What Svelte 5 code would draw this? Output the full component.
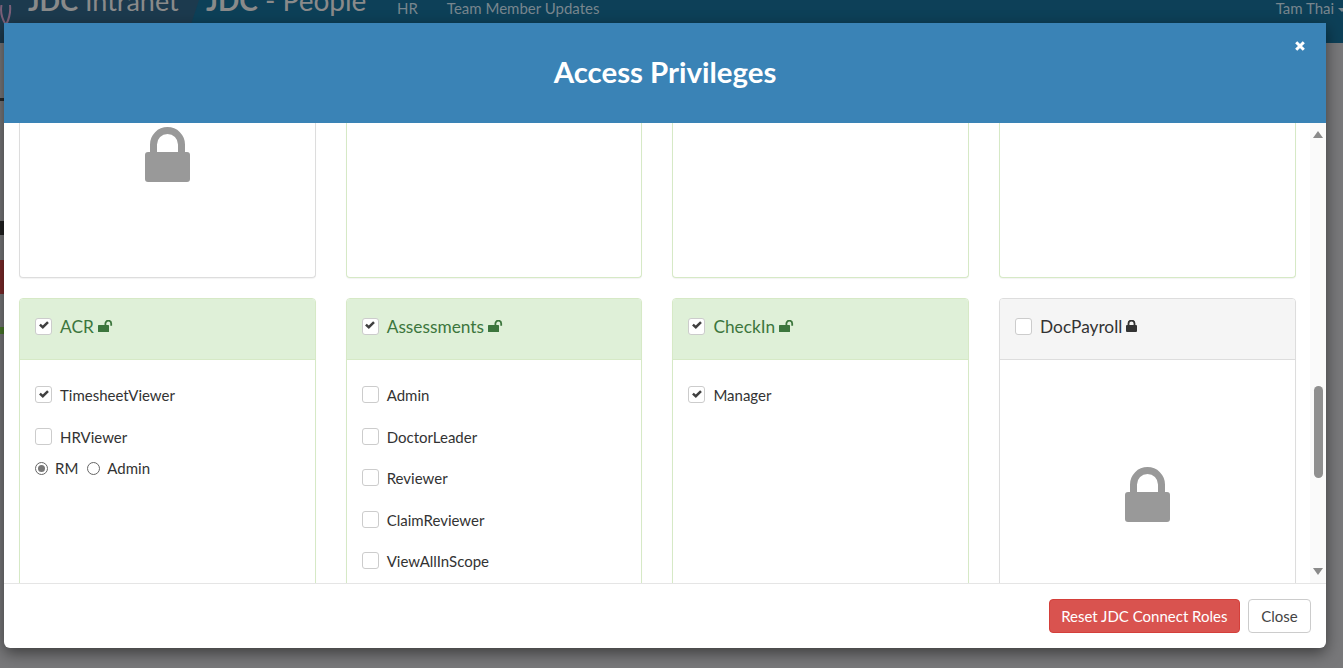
<script>
  const firstRow = [{ lock: true }, {}, {}, {}];

  const panels = [
    {
      name: 'ACR',
      on: true,
      items: [
        { label: 'TimesheetViewer', checked: true },
        { label: 'HRViewer', radios: ['RM', 'Admin'] }
      ]
    },
    {
      name: 'Assessments',
      on: true,
      items: [
        { label: 'Admin' },
        { label: 'DoctorLeader' },
        { label: 'Reviewer' },
        { label: 'ClaimReviewer' },
        { label: 'ViewAllInScope' }
      ]
    },
    {
      name: 'CheckIn',
      on: true,
      items: [{ label: 'Manager', checked: true }]
    },
    { name: 'DocPayroll', on: false, items: [] }
  ];
</script>

{#snippet tick()}
  <svg class="tick" viewBox="0 0 10 8" width="10" height="8"><path d="M0.9 3.6 L3.8 6.2 L9 1.2" fill="none" stroke="#404040" stroke-width="2.5" /></svg>
{/snippet}

{#snippet bigLock()}
  <svg class="big-lock" viewBox="0 0 45 55" width="45" height="55">
    <path d="M5 27 V17.5 a17.5 17.5 0 0 1 35 0 V27 h-7 V17.5 a10.5 10.5 0 0 0 -21 0 V27 Z" fill="#999" />
    <rect x="0" y="25" width="45" height="30" rx="3" fill="#999" />
  </svg>
{/snippet}

<div class="page">
  <header class="topnav">
    <div class="brand">
      <svg class="logo" viewBox="0 0 12 20" width="12" height="20"><path d="M1.5 0 C0 8 2 14 6 20 M10 0 C11 8 9 14 6 20" fill="none" stroke="#7a5f78" stroke-width="2" /></svg>
      <span class="brand-bold">JDC</span>&nbsp;<span>Intranet</span>
    </div>
    <div class="app-name"><span class="brand-bold">JDC</span> - People</div>
    <nav class="links">
      <span>HR</span>
      <span>Team Member Updates</span>
    </nav>
    <div class="user">Tam Thai <i class="caret"></i></div>
  </header>

  <div class="behind">
    <div class="strip mark"></div>
    <div class="strip dark"></div>
    <div class="strip red"></div>
    <div class="strip green"></div>
  </div>

  <section class="modal">
    <div class="modal-head">
      <h1>Access Privileges</h1>
      <button class="x" aria-label="Close">
        <svg viewBox="0 0 10 10" width="10" height="10"><path d="M1.2 1.2 L8.8 8.8 M8.8 1.2 L1.2 8.8" stroke="#fff" stroke-width="3" /></svg>
      </button>
    </div>

    <div class="modal-body">
      <div class="scroll-area">
        <div class="row first">
          {#each firstRow as p}
            <div class="panel clipped" class:ok={!p.lock}>
              {#if p.lock}{@render bigLock()}{/if}
            </div>
          {/each}
        </div>

        <div class="row">
          {#each panels as p}
            <div class="panel" class:ok={p.on}>
              <div class="panel-head">
                <span class="box">{#if p.on}{@render tick()}{/if}</span>
                <span class="title">{p.name}</span>
                {#if p.on}
                  <svg class="mini" viewBox="0 0 15 12" width="15" height="12">
                    <rect x="0" y="5" width="11" height="7" rx="0.6" fill="#3c763d" />
                    <path d="M7.4 5.5 V3.6 a2.9 2.9 0 0 1 5.8 0 V5.8" fill="none" stroke="#3c763d" stroke-width="1.8" />
                  </svg>
                {:else}
                  <svg class="mini" viewBox="0 0 11 12" width="11" height="12">
                    <path d="M2.5 5.5 V3.6 a3 3 0 0 1 6 0 V5.5" fill="none" stroke="#333" stroke-width="1.8" />
                    <rect x="0" y="5" width="11" height="7" rx="1" fill="#333" />
                  </svg>
                {/if}
              </div>
              <div class="panel-body" class:locked={!p.on}>
                {#if !p.on}
                  {@render bigLock()}
                {/if}
                {#each p.items as item}
                  <label class="item">
                    <span class="box">{#if item.checked}{@render tick()}{/if}</span>
                    <span class="item-text">{item.label}</span>
                  </label>
                  {#if item.radios}
                    <div class="radios">
                      {#each item.radios as r, i}
                        <span class="radio" class:sel={i === 0}></span>
                        <span class="radio-label">{r}</span>
                      {/each}
                    </div>
                  {/if}
                {/each}
              </div>
            </div>
          {/each}
        </div>
      </div>

      <div class="scrollbar">
        <i class="arrow up"></i>
        <div class="track"><div class="thumb"></div></div>
        <i class="arrow down"></i>
      </div>
    </div>

    <div class="modal-foot">
      <button class="btn danger">Reset JDC Connect Roles</button>
      <button class="btn">Close</button>
    </div>
  </section>
</div>

<style>
  :global(body) {
    margin: 0;
    font-family: Lato, "Open Sans", sans-serif;
    background: #777;
  }

  .page {
    position: relative;
    height: 668px;
    overflow: hidden;
    background: #78787a;
  }

  .topnav {
    display: flex;
    align-items: flex-start;
    height: 43px;
    background: #0d4058;
    color: #78868e;
    overflow: hidden;
  }

  .brand {
    display: flex;
    flex: none;
    align-items: flex-end;
    box-sizing: border-box;
    width: 199px;
    height: 43px;
    padding: 0 0 29px 0;
    background: #1c3a4e;
    font-size: 27px;
    line-height: 27px;
    color: #8a8a8a;
    clip-path: polygon(0 0, 100% 0, 185px 100%, 0 100%);
  }

  .logo {
    margin: 0 16px -11px 0;
    flex: none;
  }

  .brand-bold {
    font-weight: 700;
  }

  .app-name {
    flex: none;
    width: 191px;
    margin: -14px 0 0 7px;
    font-size: 28px;
    line-height: 28px;
    color: #8a8a8a;
  }

  .links {
    display: flex;
    gap: 29px;
    font-size: 15px;
    line-height: 16px;
  }

  .user {
    margin-left: auto;
    margin-right: -3px;
    font-size: 15px;
    line-height: 16px;
    white-space: nowrap;
  }

  .caret {
    display: inline-block;
    vertical-align: middle;
    border: 4px solid transparent;
    border-top-color: #78868e;
    border-bottom: 0;
  }

  .behind {
    display: flex;
    flex-direction: column;
    width: 4px;
  }

  .strip {
    width: 4px;
  }

  .strip.mark {
    height: 3px;
    margin-top: 55px;
    background: #2a2a2a;
  }

  .strip.dark {
    height: 14px;
    margin-top: 120px;
    background: #222;
  }

  .strip.red {
    height: 34px;
    margin-top: 25px;
    background: #7e2a2a;
  }

  .strip.green {
    height: 7px;
    margin-top: 33px;
    background: #4a7a2a;
  }

  .modal {
    position: absolute;
    left: 4px;
    top: 23px;
    width: 1322px;
    height: 625px;
    display: flex;
    flex-direction: column;
    background: #fff;
    border-radius: 0 0 6px 6px;
    box-shadow: 0 5px 15px rgba(0, 0, 0, 0.5);
  }

  .modal-head {
    position: relative;
    flex: none;
    display: flex;
    align-items: center;
    justify-content: center;
    box-sizing: border-box;
    height: 100px;
    padding-bottom: 3px;
    background: #3a83b6;
    color: #fff;
  }

  .modal-head h1 {
    margin: 0;
    font-size: 29.4px;
    font-weight: 700;
  }

  .x {
    position: absolute;
    top: 18px;
    right: 21px;
    display: flex;
    padding: 0;
    border: 0;
    background: none;
  }

  .modal-body {
    position: relative;
    flex: 1;
    min-height: 0;
    overflow: hidden;
    display: flex;
  }

  .scroll-area {
    flex: 1;
    min-width: 0;
    padding: 0 0 0 15px;
  }

  .row {
    display: grid;
    grid-template-columns: repeat(4, 296.7px);
    column-gap: 30px;
    margin-bottom: 20px;
  }

  .panel {
    height: 320px;
    box-sizing: border-box;
    border: 1px solid #ddd;
    border-radius: 4px;
    box-shadow: 0 1px 1px rgba(0, 0, 0, 0.05);
    background: #fff;
  }

  .panel.clipped {
    height: 155px;
    border-top: 0;
    border-radius: 0 0 4px 4px;
    padding-top: 4px;
  }

  .panel.ok {
    border-color: #d6e9c6;
  }

  .panel-head {
    display: flex;
    align-items: center;
    height: 61px;
    box-sizing: border-box;
    padding: 0 15px 6px;
    background: #f5f5f5;
    border-bottom: 1px solid #ddd;
    border-radius: 3px 3px 0 0;
    color: #333;
    font-size: 17.3px;
  }

  .ok .panel-head {
    background: #dff0d8;
    border-bottom-color: #d6e9c6;
    color: #3c763d;
  }

  .title {
    margin-left: 8px;
  }

  .mini {
    flex: none;
    margin-left: 4px;
  }

  .box {
    flex: none;
    display: flex;
    align-items: center;
    justify-content: center;
    width: 15px;
    height: 15px;
    border: 1px solid #ccc;
    border-radius: 3px;
    background: #fff;
  }

  .tick {
    margin-bottom: 2px;
  }

  .panel-body {
    padding: 26px 15px 0;
  }

  .panel-body.locked {
    padding-top: 107px;
  }

  .big-lock {
    display: block;
    margin: 0 auto;
  }

  .item {
    display: flex;
    align-items: center;
    gap: 8px;
    height: 17px;
    margin-bottom: 24.5px;
    color: #333;
    font-size: 15px;
  }

  .item-text {
    padding-top: 1px;
  }

  .radios {
    display: flex;
    align-items: center;
    height: 16px;
    margin-top: -9px;
    color: #333;
    font-size: 15px;
  }

  .radio {
    position: relative;
    width: 11px;
    height: 11px;
    border: 1px solid #666;
    border-radius: 50%;
    background: #fff;
    margin-right: 7px;
  }

  .radio.sel::after {
    content: "";
    position: absolute;
    inset: 2px;
    border-radius: 50%;
    background: #777;
  }

  .radio-label {
    margin-right: 9px;
  }

  .scrollbar {
    flex: none;
    display: flex;
    flex-direction: column;
    align-items: center;
    width: 16px;
    background: #fafafa;
  }

  .arrow {
    flex: none;
    width: 0;
    height: 0;
    margin: 8px 0;
    border: 5px solid transparent;
  }

  .arrow.up {
    border-top: 0;
    border-bottom: 7px solid #8a8a8a;
  }

  .arrow.down {
    border-bottom: 0;
    border-top: 7px solid #8a8a8a;
  }

  .track {
    flex: 1;
    width: 100%;
    display: flex;
    justify-content: center;
  }

  .thumb {
    width: 9px;
    height: 92px;
    margin-top: 240px;
    border-radius: 5px;
    background: #8f8f8f;
  }

  .modal-foot {
    flex: none;
    display: flex;
    justify-content: flex-end;
    align-items: flex-start;
    gap: 8px;
    height: 65px;
    box-sizing: border-box;
    padding: 15px 15px 0;
    border-top: 1px solid #e5e5e5;
  }

  .btn {
    height: 34px;
    min-width: 63px;
    padding: 0 11.5px;
    font-family: inherit;
    font-size: 15px;
    color: #444;
    background: #fff;
    border: 1px solid #ccc;
    border-radius: 4px;
  }

  .btn.danger {
    color: #fff;
    background: #d9534f;
    border-color: #d43f3a;
  }
</style>
